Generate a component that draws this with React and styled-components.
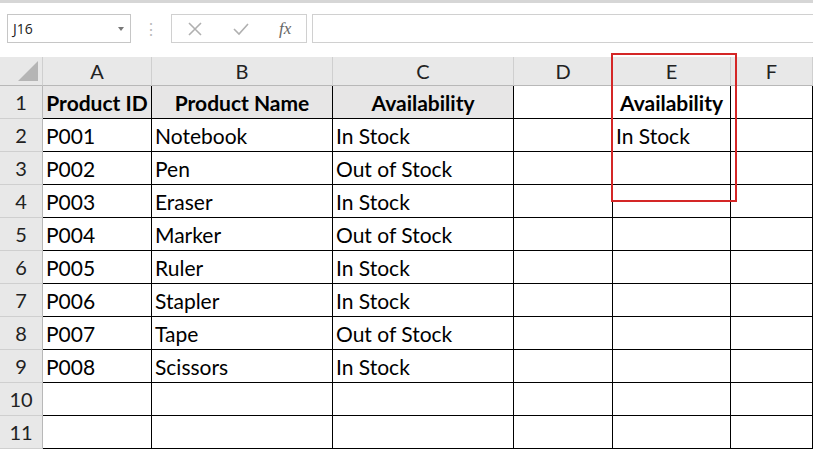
import React from 'react';
import styled, { createGlobalStyle } from 'styled-components';

const Global = createGlobalStyle`
  body { margin: 0; background: #fff; font-family: Lato, "Open Sans", sans-serif; overflow: hidden; }
`;

const Page = styled.div`
  position: relative;
  width: 813px;
  height: 455px;
  overflow: hidden;
  border-top: 3px solid #d6d6d6;
  box-sizing: border-box;
`;

const Toolbar = styled.div`
  display: flex;
  align-items: center;
  height: 42px;
  padding: 9px 0 0 7px;
  box-sizing: border-box;
`;

const NameBox = styled.div`
  width: 124px;
  height: 29px;
  border: 1px solid #c6c6c6;
  box-sizing: border-box;
  display: flex;
  align-items: center;
  justify-content: space-between;
  padding: 0 6px 0 5px;
  font-size: 14px;
  color: #222;
  font-family: "Open Sans", sans-serif;
`;

const Caret = styled.span`
  width: 0; height: 0;
  border-left: 3px solid transparent;
  border-right: 3px solid transparent;
  border-top: 4px solid #777;
`;

const Dots = styled.div`
  width: 40px;
  display: flex;
  justify-content: center;
  color: #bbb;
  font-size: 16px;
`;

const IconBox = styled.div`
  width: 136px;
  height: 29px;
  border: 1px solid #d0d0d0;
  box-sizing: border-box;
  display: flex;
  align-items: center;
  justify-content: space-around;
`;

const Fx = styled.span`
  font-family: "Liberation Serif", serif;
  font-style: italic;
  color: #666;
  font-size: 17px;
`;

const Formula = styled.div`
  flex: 1;
  height: 29px;
  margin-left: 5px;
  border: 1px solid #d0d0d0;
  border-right: none;
  box-sizing: border-box;
`;

const Sheet = styled.div`
  display: grid;
  grid-template-columns: 43px 109px 181px 181px 99px 118px 82px;
  grid-template-rows: 29px repeat(11, 33px);
  margin-top: 12px;
`;

const ColHead = styled.div`
  background: #e8e8e8;
  border-right: 1px solid #cfcfcf;
  border-bottom: 1px solid #b8b8b8;
  display: flex;
  align-items: center;
  justify-content: center;
  font-size: 20px;
  color: #222;
`;

const Corner = styled(ColHead)`
  position: relative;
  &::after {
    content: '';
    position: absolute;
    right: 4px;
    bottom: 4px;
    border-left: 20px solid transparent;
    border-bottom: 20px solid #b5b5b5;
  }
`;

const RowHead = styled.div`
  background: #e8e8e8;
  border-right: 1px solid #b8b8b8;
  border-bottom: 1px solid #cfcfcf;
  display: flex;
  align-items: center;
  justify-content: center;
  font-size: 20px;
  color: #222;
`;

const Cell = styled.div`
  border-right: 1px solid #000;
  border-bottom: 1px solid #000;
  background: ${p => (p.$fill ? '#e7e6e6' : '#fff')};
  font-weight: ${p => (p.$bold ? 700 : 400)};
  display: flex;
  align-items: center;
  justify-content: ${p => (p.$center ? 'center' : 'flex-start')};
  padding: 0 3px;
  font-size: 21px;
  color: #000;
  white-space: nowrap;
  overflow: hidden;
`;

const Highlight = styled.div`
  position: absolute;
  left: 611px;
  top: 50px;
  width: 126px;
  height: 149px;
  border: 2px solid #d42626;
  box-sizing: border-box;
  pointer-events: none;
`;

const data = [
  ['P001', 'Notebook', 'In Stock'],
  ['P002', 'Pen', 'Out of Stock'],
  ['P003', 'Eraser', 'In Stock'],
  ['P004', 'Marker', 'Out of Stock'],
  ['P005', 'Ruler', 'In Stock'],
  ['P006', 'Stapler', 'In Stock'],
  ['P007', 'Tape', 'Out of Stock'],
  ['P008', 'Scissors', 'In Stock'],
  ['', '', ''],
  ['', '', ''],
];

export default function App() {
  return (
    <Page>
      <Global />
      <Toolbar>
        <NameBox>J16<Caret /></NameBox>
        <Dots>⋮</Dots>
        <IconBox>
          <svg width="16" height="16" viewBox="0 0 16 16"><path d="M2 2L14 14M14 2L2 14" stroke="#b0b0b0" strokeWidth="1.6" /></svg>
          <svg width="18" height="16" viewBox="0 0 18 16"><path d="M2 8L7 13L16 3" stroke="#b0b0b0" strokeWidth="1.6" fill="none" /></svg>
          <Fx>fx</Fx>
        </IconBox>
        <Formula />
      </Toolbar>
      <Sheet>
        <Corner />
        {['A', 'B', 'C', 'D', 'E', 'F'].map(c => <ColHead key={c}>{c}</ColHead>)}
        <RowHead>1</RowHead>
        <Cell $bold $fill $center>Product ID</Cell>
        <Cell $bold $fill $center>Product Name</Cell>
        <Cell $bold $fill $center>Availability</Cell>
        <Cell />
        <Cell $bold $center>Availability</Cell>
        <Cell />
        {data.map((r, i) => (
          <React.Fragment key={i}>
            <RowHead>{i + 2}</RowHead>
            <Cell>{r[0]}</Cell>
            <Cell>{r[1]}</Cell>
            <Cell>{r[2]}</Cell>
            <Cell />
            <Cell>{i === 0 ? 'In Stock' : ''}</Cell>
            <Cell />
          </React.Fragment>
        ))}
      </Sheet>
      <Highlight />
    </Page>
  );
}
